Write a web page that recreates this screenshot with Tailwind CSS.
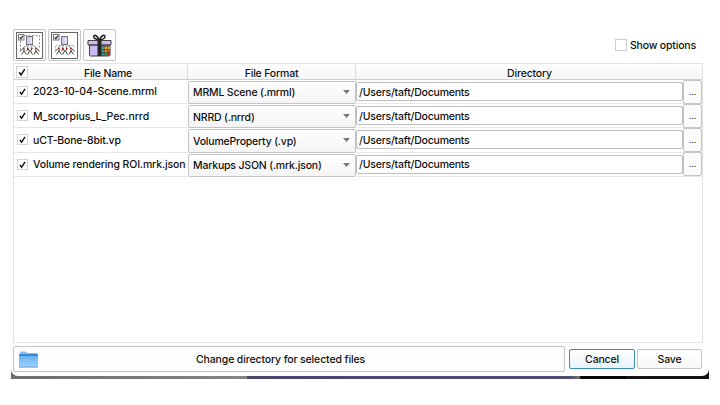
<!DOCTYPE html>
<html lang="en">
<head>
<meta charset="utf-8">
<title>Save Scene</title>
<script src="https://cdn.jsdelivr.net/npm/@tailwindcss/browser@4"></script>
</head>
<body class="bg-white w-[720px] h-[405px] overflow-hidden font-['Inter',sans-serif] text-[10.5px] tracking-[-0.18px] font-medium text-[#111] leading-none">
<svg class="hidden">
  <defs>
    <symbol id="check" viewBox="0 0 12 12"><rect x=".5" y=".5" width="11" height="11" fill="#fff" stroke="#d2d2d2"/><path d="M3.2 6.3 5 8.9 8.8 3.1" fill="none" stroke="#111" stroke-width="1.5"/></symbol>
    <symbol id="tree" viewBox="0 0 27 27">
      <rect x=".5" y=".5" width="26" height="26" fill="#fff" stroke="#666"/>
      <path d="M12 12.500 7.500 15.500M13 12.500 11.500 15.500M14.500 12.500 15.500 15.500M15.500 12.500 20 15.500" stroke="#777" stroke-width=".8"/>
      <path d="M7 16.500 4 19.500M8 16.500v2.500L5.500 22.500M8 19 10.500 22.500M12 16.500 10.500 19M12 16.500 13.500 19 11.800 22.500M16 16.500 14.500 19 16.500 22.500M20 16.500v2.500L18 22.500M20 19 22.500 22.500M21 16.500 23.500 19.500" fill="none" stroke="#222" stroke-width=".9"/>
      <path d="M7 15.500h1.500v1.500H7zM11 15.500h1.500v1.500H11zM15 15.500h1.500v1.500H15zM19 15.500h1.500v1.500H19z" fill="#9c261e"/>
      <rect x="10.500" y="4.500" width="6" height="8" fill="#d0ccfa" stroke="#777"/>
      <path d="M15 6v5" stroke="#fff"/>
      <rect x="2.500" y="2.500" width="5.500" height="5.500" fill="#fff" stroke="#777"/><path d="m3.700 5.300 1.200 1.400 2.100-3" fill="none" stroke="#223047" stroke-width="1.200"/>
    </symbol>
  </defs>
</svg>
<div class="ml-[11px] w-[698px] h-[379px] flex flex-col bg-[linear-gradient(to_right,#6d6d6d_0,#858585_236px,#4b476b_236px,#514c72_560px,#777_568px,#080808_570px,#080808_616px,#6a1a1a_616px,#141414_617px)]">
  <main class="w-full h-[376px] bg-white rounded-b-[7px] pl-[2px] pr-[6px] pt-[29px] flex flex-col">
    <header class="flex h-[34px] gap-[2px]">
      <button class="w-[33px] h-[32px] border border-[#c6c6c6] rounded-[2px] bg-[#fafafa] flex items-center justify-center"><svg class="w-[27px] h-[27px]" viewBox="0 0 27 27"><use href="#tree"/><path d="M9 3.500h14.500V16M4.500 9v9" fill="none" stroke="#777" stroke-width=".8" stroke-dasharray="2 1.500"/></svg></button>
      <button class="w-[33px] h-[32px] border border-[#c6c6c6] rounded-[2px] bg-[#fafafa] flex items-center justify-center"><svg class="w-[27px] h-[27px]" viewBox="0 0 27 27"><use href="#tree"/><path d="M9.500 13.500H4.500v4.500M17.500 13.500h5.500v3" fill="none" stroke="#999" stroke-width=".7" stroke-dasharray="2 1"/></svg></button>
      <button class="w-[33px] h-[32px] border border-[#c6c6c6] rounded-[2px] bg-[#fafafa] flex items-center justify-center"><svg class="w-[27px] h-[27px]" viewBox="0 0 27 27">
        <path d="M3.500 13h20v10q0 1-1 1H4.500q-1 0-1-1zM2 8.500h23V13H2z" fill="#cbbdf3" stroke="#333" stroke-width=".9"/>
        <path d="M11.500 8.500h4V24h-4z" fill="#252525"/>
        <path d="M13.300 8C11 3 8 2.300 7.700 4.300 7.500 6 10 7.300 13.300 8 15.500 3 18.700 2.300 19 4.300 19.200 6 17 7.300 13.300 8z" fill="none" stroke="#222" stroke-width="1.500"/>
        <path d="M15 14h9.500v9.500H15z" fill="#333"/>
        <path d="M15.500 14.500h2.500v2.500h-2.500z" fill="#3f9fae"/><path d="M18.500 14.500H21v2.500h-2.500z" fill="#d9b52d"/><path d="M21.500 14.500H24v2.500h-2.500z" fill="#e9b32a"/>
        <path d="M15.500 17.500h2.500V20h-2.500z" fill="#3c9a5b"/><path d="M18.500 17.500H21V20h-2.500z" fill="#e1942c"/><path d="M21.500 17.500H24V20h-2.500z" fill="#dd5b26"/>
        <path d="M15.500 20.500h2.500V23h-2.500z" fill="#3979bd"/><path d="M18.500 20.500H21V23h-2.500z" fill="#4a9b45"/><path d="M21.500 20.500H24V23h-2.500z" fill="#c9352b"/>
      </svg></button>
      <label class="ml-auto mr-[7px] mt-[10px] h-[12px] flex items-center"><span class="w-[12px] h-[12px] border border-[#cfcfcf] bg-white mr-[3px]"></span><span class="w-[66px] whitespace-nowrap pt-[2px]">Show options</span></label>
    </header>
    <section class="h-[280px] border border-[#e2e2e2] flex flex-col">
      <div class="h-[16px] shrink-0 grid grid-cols-[174px_168px_1fr] bg-linear-to-b from-white to-[#f6f6f6] border-b border-[#d0d0d0] text-center leading-[19px]">
        <div class="flex items-center h-[15px] border-r border-[#dcdcdc] pl-[2px]"><svg class="w-[12px] h-[12px] shrink-0"><use href="#check"/></svg><span class="grow pl-px pt-[4px]">File Name</span></div>
        <div class="border-r border-[#dcdcdc]">File Format</div>
        <div class="pl-px">Directory</div>
      </div>
      <div class="grid grid-cols-[174px_168px_1fr] auto-rows-[24.2px]">
        <div class="flex items-center pl-[3px] border-b border-[#e8e8e8]"><svg class="w-[11px] h-[11px] mr-[5px] shrink-0"><use href="#check"/></svg><span class="whitespace-nowrap pt-[2px] tracking-[-0.1px]">2023-10-04-Scene.mrml</span></div>
        <div class="mt-px border border-[#c4c4c4] rounded-[2px] bg-linear-to-b from-white to-[#f4f4f4] flex items-center justify-between pl-[4px] pr-[5px]"><span class="pt-[2px]">MRML Scene (.mrml)</span><svg class="w-[7px] h-[4px] mb-px"><path d="M0 0h7L3.500 4z" fill="#777"/></svg></div>
        <div class="flex items-center border-b border-[#e8e8e8]"><span class="w-[327px] h-[19px] border border-[#bcbcbc] rounded-[2px] bg-white pl-[2px] tracking-[-0.21px] leading-[19px]">/Users/taft/Documents</span><span class="w-[19px] h-[24px] border border-[#c4c4c4] rounded-[2px] bg-[#fcfcfc] text-center text-[9px] leading-[22px]">...</span></div>

        <div class="flex items-center pl-[3px] border-b border-[#e8e8e8]"><svg class="w-[11px] h-[11px] mr-[5px] shrink-0"><use href="#check"/></svg><span class="whitespace-nowrap pt-[2px] tracking-[-0.05px]">M_scorpius_L_Pec.nrrd</span></div>
        <div class="mt-px border border-[#c4c4c4] rounded-[2px] bg-linear-to-b from-white to-[#f4f4f4] flex items-center justify-between pl-[4px] pr-[5px]"><span class="pt-[2px]">NRRD (.nrrd)</span><svg class="w-[7px] h-[4px] mb-px"><path d="M0 0h7L3.500 4z" fill="#777"/></svg></div>
        <div class="flex items-center border-b border-[#e8e8e8]"><span class="w-[327px] h-[19px] border border-[#bcbcbc] rounded-[2px] bg-white pl-[2px] tracking-[-0.21px] leading-[19px]">/Users/taft/Documents</span><span class="w-[19px] h-[24px] border border-[#c4c4c4] rounded-[2px] bg-[#fcfcfc] text-center text-[9px] leading-[22px]">...</span></div>

        <div class="flex items-center pl-[3px] border-b border-[#e8e8e8]"><svg class="w-[11px] h-[11px] mr-[5px] shrink-0"><use href="#check"/></svg><span class="whitespace-nowrap pt-[2px]">uCT-Bone-8bit.vp</span></div>
        <div class="mt-px border border-[#c4c4c4] rounded-[2px] bg-linear-to-b from-white to-[#f4f4f4] flex items-center justify-between pl-[4px] pr-[5px]"><span class="pt-[2px] tracking-[-0.2px]">VolumeProperty (.vp)</span><svg class="w-[7px] h-[4px] mb-px"><path d="M0 0h7L3.500 4z" fill="#777"/></svg></div>
        <div class="flex items-center border-b border-[#e8e8e8]"><span class="w-[327px] h-[19px] border border-[#bcbcbc] rounded-[2px] bg-white pl-[2px] tracking-[-0.21px] leading-[19px]">/Users/taft/Documents</span><span class="w-[19px] h-[24px] border border-[#c4c4c4] rounded-[2px] bg-[#fcfcfc] text-center text-[9px] leading-[22px]">...</span></div>

        <div class="flex items-center pl-[3px] border-b border-[#e8e8e8]"><svg class="w-[11px] h-[11px] mr-[5px] shrink-0"><use href="#check"/></svg><span class="whitespace-nowrap pt-[2px] tracking-[-0.14px]">Volume rendering ROI.mrk.json</span></div>
        <div class="mt-px border border-[#c4c4c4] rounded-[2px] bg-linear-to-b from-white to-[#f4f4f4] flex items-center justify-between pl-[4px] pr-[5px]"><span class="pt-[2px]">Markups JSON (.mrk.json)</span><svg class="w-[7px] h-[4px] mb-px"><path d="M0 0h7L3.500 4z" fill="#777"/></svg></div>
        <div class="flex items-center border-b border-[#e8e8e8]"><span class="w-[327px] h-[19px] border border-[#bcbcbc] rounded-[2px] bg-white pl-[2px] tracking-[-0.21px] leading-[18px]">/Users/taft/Documents</span><span class="w-[19px] h-[24px] border border-[#c4c4c4] rounded-[2px] bg-[#fcfcfc] text-center text-[9px] leading-[22px]">...</span></div>
      </div>
    </section>
    <footer class="mt-[3px] h-[26px] flex items-center">
      <button class="w-[552px] h-[26px] border border-[#c4c4c4] rounded-[2px] bg-[#fefefe] flex items-center pl-[5px]">
        <svg class="w-[19px] h-[17px] shrink-0" viewBox="0 0 19 17"><defs><linearGradient id="f" x2="0" y2="1"><stop stop-color="#62aef0"/><stop offset="1" stop-color="#a2cffb"/></linearGradient></defs><path d="M1 3V1.500Q1 .5 2 .5h4.500L8 2h10v3H1z" fill="#88bdec"/><path d="M0 3.500h19V16q0 .5-.5.500H.5Q0 16.500 0 16z" fill="url(#f)"/><path d="M0 4h19" stroke="#1f74bd" stroke-width="1.300"/><path d="M0 16h19" stroke="#64a3df"/></svg>
        <span class="grow text-center pr-[41px] pt-[2px] tracking-[-0.13px]">Change directory for selected files</span>
      </button>
      <button class="ml-[4px] w-[66px] h-[20px] border border-[#3a8fb7] rounded-[2px] bg-linear-to-b from-white to-[#e9f2f9] pt-[2px]">Cancel</button>
      <button class="ml-[2px] w-[65px] h-[20px] border border-[#c4c4c4] rounded-[2px] bg-linear-to-b from-white to-[#f8f8f8] pt-[2px]">Save</button>
    </footer>
  </main>
</div>
</body>
</html>
